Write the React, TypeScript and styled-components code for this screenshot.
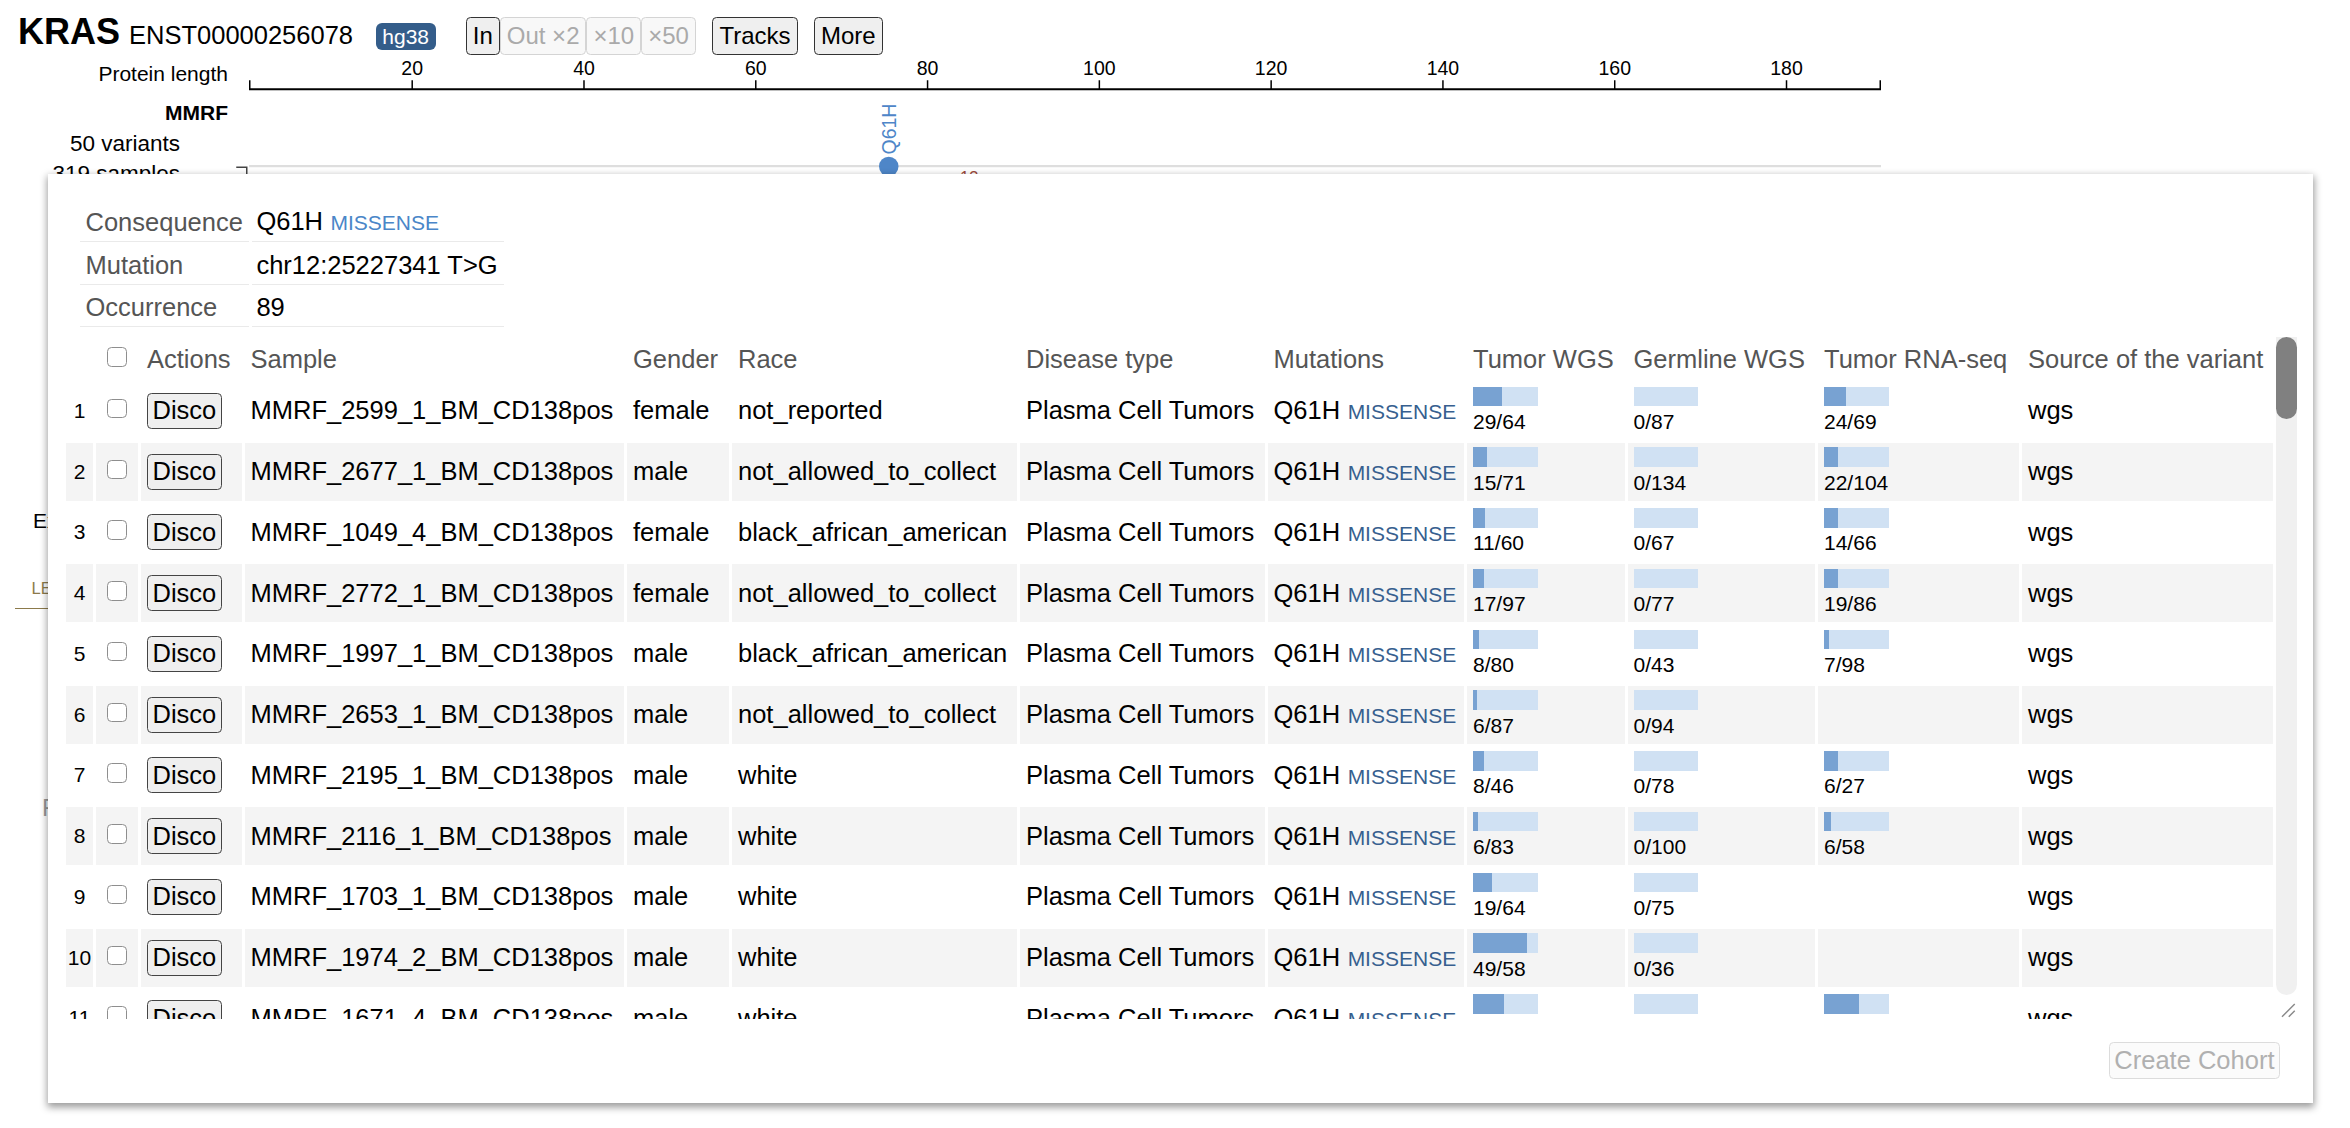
import React from "react";
import styled, { createGlobalStyle } from "styled-components";

type Count = [number, number];

interface SampleRow {
  sample: string;
  gender: string;
  race: string;
  tumor: Count;
  germline: Count;
  rna?: Count;
}

const shownRows: SampleRow[] = [
  { sample: "MMRF_2599_1_BM_CD138pos", gender: "female", race: "not_reported", tumor: [29, 64], germline: [0, 87], rna: [24, 69] },
  { sample: "MMRF_2677_1_BM_CD138pos", gender: "male", race: "not_allowed_to_collect", tumor: [15, 71], germline: [0, 134], rna: [22, 104] },
  { sample: "MMRF_1049_4_BM_CD138pos", gender: "female", race: "black_african_american", tumor: [11, 60], germline: [0, 67], rna: [14, 66] },
  { sample: "MMRF_2772_1_BM_CD138pos", gender: "female", race: "not_allowed_to_collect", tumor: [17, 97], germline: [0, 77], rna: [19, 86] },
  { sample: "MMRF_1997_1_BM_CD138pos", gender: "male", race: "black_african_american", tumor: [8, 80], germline: [0, 43], rna: [7, 98] },
  { sample: "MMRF_2653_1_BM_CD138pos", gender: "male", race: "not_allowed_to_collect", tumor: [6, 87], germline: [0, 94] },
  { sample: "MMRF_2195_1_BM_CD138pos", gender: "male", race: "white", tumor: [8, 46], germline: [0, 78], rna: [6, 27] },
  { sample: "MMRF_2116_1_BM_CD138pos", gender: "male", race: "white", tumor: [6, 83], germline: [0, 100], rna: [6, 58] },
  { sample: "MMRF_1703_1_BM_CD138pos", gender: "male", race: "white", tumor: [19, 64], germline: [0, 75] },
  { sample: "MMRF_1974_2_BM_CD138pos", gender: "male", race: "white", tumor: [49, 58], germline: [0, 36] },
  { sample: "MMRF_1671_4_BM_CD138pos", gender: "male", race: "white", tumor: [31, 64], germline: [0, 71], rna: [30, 55] },
];

// the rest of the 89 samples sit below the fold of the scroll box
const races = ["white", "black_african_american", "not_reported", "not_allowed_to_collect"];
const moreRows: SampleRow[] = Array.from({ length: 78 }, (_, i) => {
  const n = i + 12;
  const rna: Count | undefined =
    n % 4 === 0 ? undefined : [3 + ((n * 5) % 25), 40 + ((n * 9) % 60)];
  return {
    sample: `MMRF_${1100 + ((n * 379) % 1650)}_1_BM_CD138pos`,
    gender: n % 3 === 0 ? "female" : "male",
    race: races[n % races.length],
    tumor: [4 + ((n * 7) % 40), 50 + ((n * 11) % 45)],
    germline: [0, 40 + ((n * 13) % 90)],
    rna,
  };
});

const rows = [...shownRows, ...moreRows];

const ticks = [20, 40, 60, 80, 100, 120, 140, 160, 180];
const aaToX = (aa: number) => 12 + (aa - 1) * 5.7263;

// scroll rail: 455px frame, 16px resize corner, 38.5 + 2 per row plus header
const frameHeight = 455;
const contentHeight = 2 + 26.3 + 2 + rows.length * 40.5;
const railLength = frameHeight - 16;
const thumbLength = (railLength * frameHeight) / contentHeight;

const GlobalStyle = createGlobalStyle`
  * { box-sizing: border-box; }
  html, body { margin: 0; padding: 0; background: #fff; }
  body {
    font-family: "Liberation Sans", Arial, Helvetica, sans-serif;
    color: #000;
    overflow: hidden;
  }
`;

const Page = styled.div`
  zoom: 1.5;
  position: relative;
  height: 752px;
  padding-left: 10px;
  overflow: hidden;
`;

const Header = styled.div`
  display: flex;
  align-items: baseline;
  height: 36px;
  padding: 7px 0 0 2px;
`;

const GeneName = styled.span`
  font-size: 24px;
  font-weight: bold;
`;

const Transcript = styled.span`
  font-size: 17px;
  margin-left: 6px;
`;

const Badge = styled.span`
  margin-left: 15px;
  padding: 0 4.5px;
  line-height: 18px;
  font-size: 14px;
  color: #fff;
  background: #345d8a;
  border-radius: 4px;
`;

const ButtonGroup = styled.span`
  display: inline-flex;
  align-items: baseline;
  margin-left: 20px;
`;

const ToolButton = styled.button<{ $gap?: number }>`
  height: 25px;
  margin: 0 0 0 ${(p) => p.$gap ?? 0}px;
  padding: 0 4px;
  font-family: inherit;
  font-size: 16px;
  line-height: 23px;
  color: #000;
  background: #efefef;
  border: 1px solid #333;
  border-radius: 3px;

  &:disabled {
    color: #aaa;
    background: #f8f8f8;
    border-color: #d4d4d4;
  }
`;

const LaneRow = styled.div<{ $height: number }>`
  display: grid;
  grid-template-columns: 144px 1110px;
  height: ${(p) => p.$height}px;
`;

const RulerLabel = styled.div`
  padding: 5px 2px 0 0;
  text-align: right;
  font-size: 14px;
  line-height: 16px;
`;

const TrackLabels = styled.div`
  padding-top: 3.3px;
  text-align: right;
  line-height: 20.5px;
`;

const TrackName = styled.div`
  padding-right: 2px;
  font-size: 14px;
  font-weight: bold;
`;

const TrackStat = styled.div`
  padding-right: 34px;
  font-size: 15px;
`;

const SideNote = styled.div<{ $top: number; $left: number }>`
  margin: ${(p) => p.$top}px 0 0 ${(p) => p.$left}px;
  font-size: 14px;
  line-height: 16px;
`;

const TabBar = styled.div`
  width: 1244px;
  margin-top: 26.5px;
  border-bottom: 1px solid #8c7a4b;
`;

const Tab = styled.span`
  display: inline-block;
  padding: 0 0 6px 11px;
  font-size: 11px;
  line-height: 13px;
  color: #8c7a4b;
`;

const FaintTitle = styled.div`
  margin: 123.5px 0 0 18px;
  font-size: 16px;
  line-height: 18px;
  color: #999;
`;

const Popup = styled.div`
  position: absolute;
  left: 32px;
  top: 116px;
  width: 1510px;
  height: 619px;
  display: flex;
  flex-direction: column;
  padding: 16px 11px 16px 10px;
  background: #fff;
  box-shadow: 0 2px 5px 1px rgba(0, 0, 0, 0.4);
`;

const InfoTable = styled.table`
  align-self: flex-start;
  margin-left: 9px;
  border-spacing: 2px;
  font-size: 17px;
  line-height: 20.5px;
`;

const InfoKey = styled.td`
  width: 111px;
  padding: 3px 4px 2px;
  color: #555;
  white-space: nowrap;
  border-bottom: 1px solid #eaeaea;
`;

const InfoValue = styled.td`
  width: 168px;
  padding: 3px 3px 2px;
  white-space: nowrap;
  border-bottom: 1px solid #eaeaea;
`;

const ClassTag = styled.span<{ $color: string }>`
  margin-left: 5px;
  font-size: 14px;
  color: ${(p) => p.$color};
`;

const TableFrame = styled.div`
  flex: none;
  display: flex;
  height: ${frameHeight}px;
  margin-top: 4.6px;
`;

const ScrollBox = styled.div`
  flex: 1;
  overflow-x: hidden;
  overflow-y: auto;
  scrollbar-width: none;

  &::-webkit-scrollbar {
    display: none;
  }
`;

const ScrollRail = styled.div`
  display: flex;
  flex-direction: column;
  width: 14px;
`;

const RailTrack = styled.div`
  flex: 1;
  background: #f0f0f0;
  border-radius: 0 0 7px 7px;
`;

const RailThumb = styled.div`
  background: #808080;
  border-radius: 7px;
`;

const ResizeGrip = styled.svg`
  display: block;
  width: 14px;
  height: 16px;
`;

const SampleTable = styled.table`
  width: 1475px;
  table-layout: fixed;
  border-spacing: 2px;
  font-size: 17px;
`;

const HeadCell = styled.th<{ $w: number }>`
  width: ${(p) => p.$w}px;
  height: 26.3px;
  padding: 0 4px;
  text-align: left;
  font-weight: normal;
  color: #555;
  white-space: nowrap;
  overflow: hidden;
`;

const Row = styled.tr`
  height: 38.5px;

  &:nth-child(even) > td {
    background: #f4f4f4;
  }
`;

const Cell = styled.td<{ $top?: boolean }>`
  padding: ${(p) => (p.$top ? "3px 4px 0" : "0 4px")};
  vertical-align: ${(p) => (p.$top ? "top" : "middle")};
  white-space: nowrap;
  overflow: hidden;
`;

const NumCell = styled.td`
  padding: 0;
  text-align: center;
  font-size: 14px;
`;

const Checkbox = styled.input.attrs({ type: "checkbox" })`
  appearance: none;
  display: block;
  width: 13px;
  height: 13px;
  margin: -3px auto 0;
  background: #fff;
  border: 1px solid #8e8e8e;
  border-radius: 3px;
`;

const DiscoButton = styled.button`
  height: 24px;
  padding: 0 3px;
  font-family: inherit;
  font-size: 17px;
  line-height: 22px;
  color: #000;
  background: #efefef;
  border: 1px solid #444;
  border-radius: 3px;
`;

const BarTrack = styled.div`
  width: 43px;
  height: 13px;
  margin-bottom: 2.6px;
  background: #d0e1f3;
`;

const BarFill = styled.div`
  height: 100%;
  background: #78a2d2;
`;

const CountText = styled.div`
  font-size: 14px;
  line-height: 16px;
`;

const Footer = styled.div`
  display: flex;
  justify-content: flex-end;
  margin-top: 15.4px;
  padding-right: 11px;
`;

const CohortButton = styled.button`
  height: 24.5px;
  padding: 0 3px;
  font-family: inherit;
  font-size: 17px;
  line-height: 22px;
  color: #b0b0b0;
  background: #fbfbfb;
  border: 1px solid #dcdcdc;
  border-radius: 3px;
`;

function CountBar({ count }: { count?: Count }) {
  if (!count) return null;
  const [hit, total] = count;
  return (
    <>
      <BarTrack>
        <BarFill style={{ width: `${(hit / total) * 100}%` }} />
      </BarTrack>
      <CountText>
        {hit}/{total}
      </CountText>
    </>
  );
}

function Ruler() {
  return (
    <svg width={1110} height={26}>
      <line x1={12} x2={1100} y1={23.5} y2={23.5} stroke="#000" strokeWidth={1.2} />
      <line x1={12.5} x2={12.5} y1={17.5} y2={23.5} stroke="#000" />
      <line x1={1099.5} x2={1099.5} y1={17.5} y2={23.5} stroke="#000" />
      {ticks.map((t) => (
        <g key={t}>
          <line x1={aaToX(t)} x2={aaToX(t)} y1={17.5} y2={23.5} stroke="#000" />
          <text x={aaToX(t)} y={14} fontSize={13} textAnchor="middle" fontFamily="Liberation Sans, Arial, sans-serif">
            {t}
          </text>
        </g>
      ))}
    </svg>
  );
}

function Lollipops() {
  return (
    <svg width={1110} height={70}>
      <path d="M3.5 49.5 H10.5 V70" fill="none" stroke="#444" />
      <line x1={12} x2={1100} y1={48.7} y2={48.7} stroke="#dedede" strokeWidth={1.5} />
      <text
        x={443}
        y={41}
        fontSize={13}
        fill="#4e86c8"
        transform="rotate(-90 443 41)"
        fontFamily="Liberation Sans, Arial, sans-serif"
      >
        Q61H
      </text>
      <circle cx={438.5} cy={49} r={6.5} fill="#4e86c8" />
      <text x={486} y={60} fontSize={11} fill="#9c4a3a" fontFamily="Liberation Sans, Arial, sans-serif">
        13
      </text>
    </svg>
  );
}

export default function App() {
  return (
    <>
      <GlobalStyle />
      <Page>
        <Header>
          <GeneName>KRAS</GeneName>
          <Transcript>ENST00000256078</Transcript>
          <Badge>hg38</Badge>
          <ButtonGroup>
            <ToolButton>In</ToolButton>
            <ToolButton disabled>Out ×2</ToolButton>
            <ToolButton disabled>×10</ToolButton>
            <ToolButton disabled>×50</ToolButton>
          </ButtonGroup>
          <ToolButton $gap={11}>Tracks</ToolButton>
          <ToolButton $gap={11}>More</ToolButton>
        </Header>

        <LaneRow $height={26}>
          <RulerLabel>Protein length</RulerLabel>
          <Ruler />
        </LaneRow>

        <LaneRow $height={70}>
          <TrackLabels>
            <TrackName>MMRF</TrackName>
            <TrackStat>50 variants</TrackStat>
            <TrackStat>319 samples</TrackStat>
          </TrackLabels>
          <Lollipops />
        </LaneRow>

        <SideNote $top={207} $left={12}>
          Exons
        </SideNote>
        <TabBar>
          <Tab>LEGEND</Tab>
        </TabBar>
        <FaintTitle>Filter</FaintTitle>

        <Popup>
          <InfoTable>
            <tbody>
              <tr>
                <InfoKey>Consequence</InfoKey>
                <InfoValue>
                  Q61H<ClassTag $color="#4a86c8">MISSENSE</ClassTag>
                </InfoValue>
              </tr>
              <tr>
                <InfoKey>Mutation</InfoKey>
                <InfoValue>chr12:25227341 T&gt;G</InfoValue>
              </tr>
              <tr>
                <InfoKey>Occurrence</InfoKey>
                <InfoValue>89</InfoValue>
              </tr>
            </tbody>
          </InfoTable>

          <TableFrame>
            <ScrollBox>
              <SampleTable>
                <thead>
                  <tr>
                    <HeadCell $w={18} />
                    <HeadCell $w={28}>
                      <Checkbox />
                    </HeadCell>
                    <HeadCell $w={67}>Actions</HeadCell>
                    <HeadCell $w={253}>Sample</HeadCell>
                    <HeadCell $w={68}>Gender</HeadCell>
                    <HeadCell $w={190}>Race</HeadCell>
                    <HeadCell $w={163}>Disease type</HeadCell>
                    <HeadCell $w={131}>Mutations</HeadCell>
                    <HeadCell $w={105}>Tumor WGS</HeadCell>
                    <HeadCell $w={125}>Germline WGS</HeadCell>
                    <HeadCell $w={134}>Tumor RNA-seq</HeadCell>
                    <HeadCell $w={167}>Source of the variant</HeadCell>
                  </tr>
                </thead>
                <tbody>
                  {rows.map((row, i) => (
                    <Row key={i}>
                      <NumCell>{i + 1}</NumCell>
                      <Cell>
                        <Checkbox />
                      </Cell>
                      <Cell>
                        <DiscoButton>Disco</DiscoButton>
                      </Cell>
                      <Cell>{row.sample}</Cell>
                      <Cell>{row.gender}</Cell>
                      <Cell>{row.race}</Cell>
                      <Cell>Plasma Cell Tumors</Cell>
                      <Cell>
                        Q61H<ClassTag $color="#375f8f">MISSENSE</ClassTag>
                      </Cell>
                      <Cell $top>
                        <CountBar count={row.tumor} />
                      </Cell>
                      <Cell $top>
                        <CountBar count={row.germline} />
                      </Cell>
                      <Cell $top>
                        <CountBar count={row.rna} />
                      </Cell>
                      <Cell>wgs</Cell>
                    </Row>
                  ))}
                </tbody>
              </SampleTable>
            </ScrollBox>
            <ScrollRail>
              <RailTrack>
                <RailThumb style={{ height: thumbLength }} />
              </RailTrack>
              <ResizeGrip viewBox="0 0 14 16">
                <path d="M4 14.5 L12.5 6 M8.5 14.5 L12.5 10.5" stroke="#8a8a8a" strokeWidth={1} fill="none" />
              </ResizeGrip>
            </ScrollRail>
          </TableFrame>

          <Footer>
            <CohortButton disabled>Create Cohort</CohortButton>
          </Footer>
        </Popup>
      </Page>
    </>
  );
}
